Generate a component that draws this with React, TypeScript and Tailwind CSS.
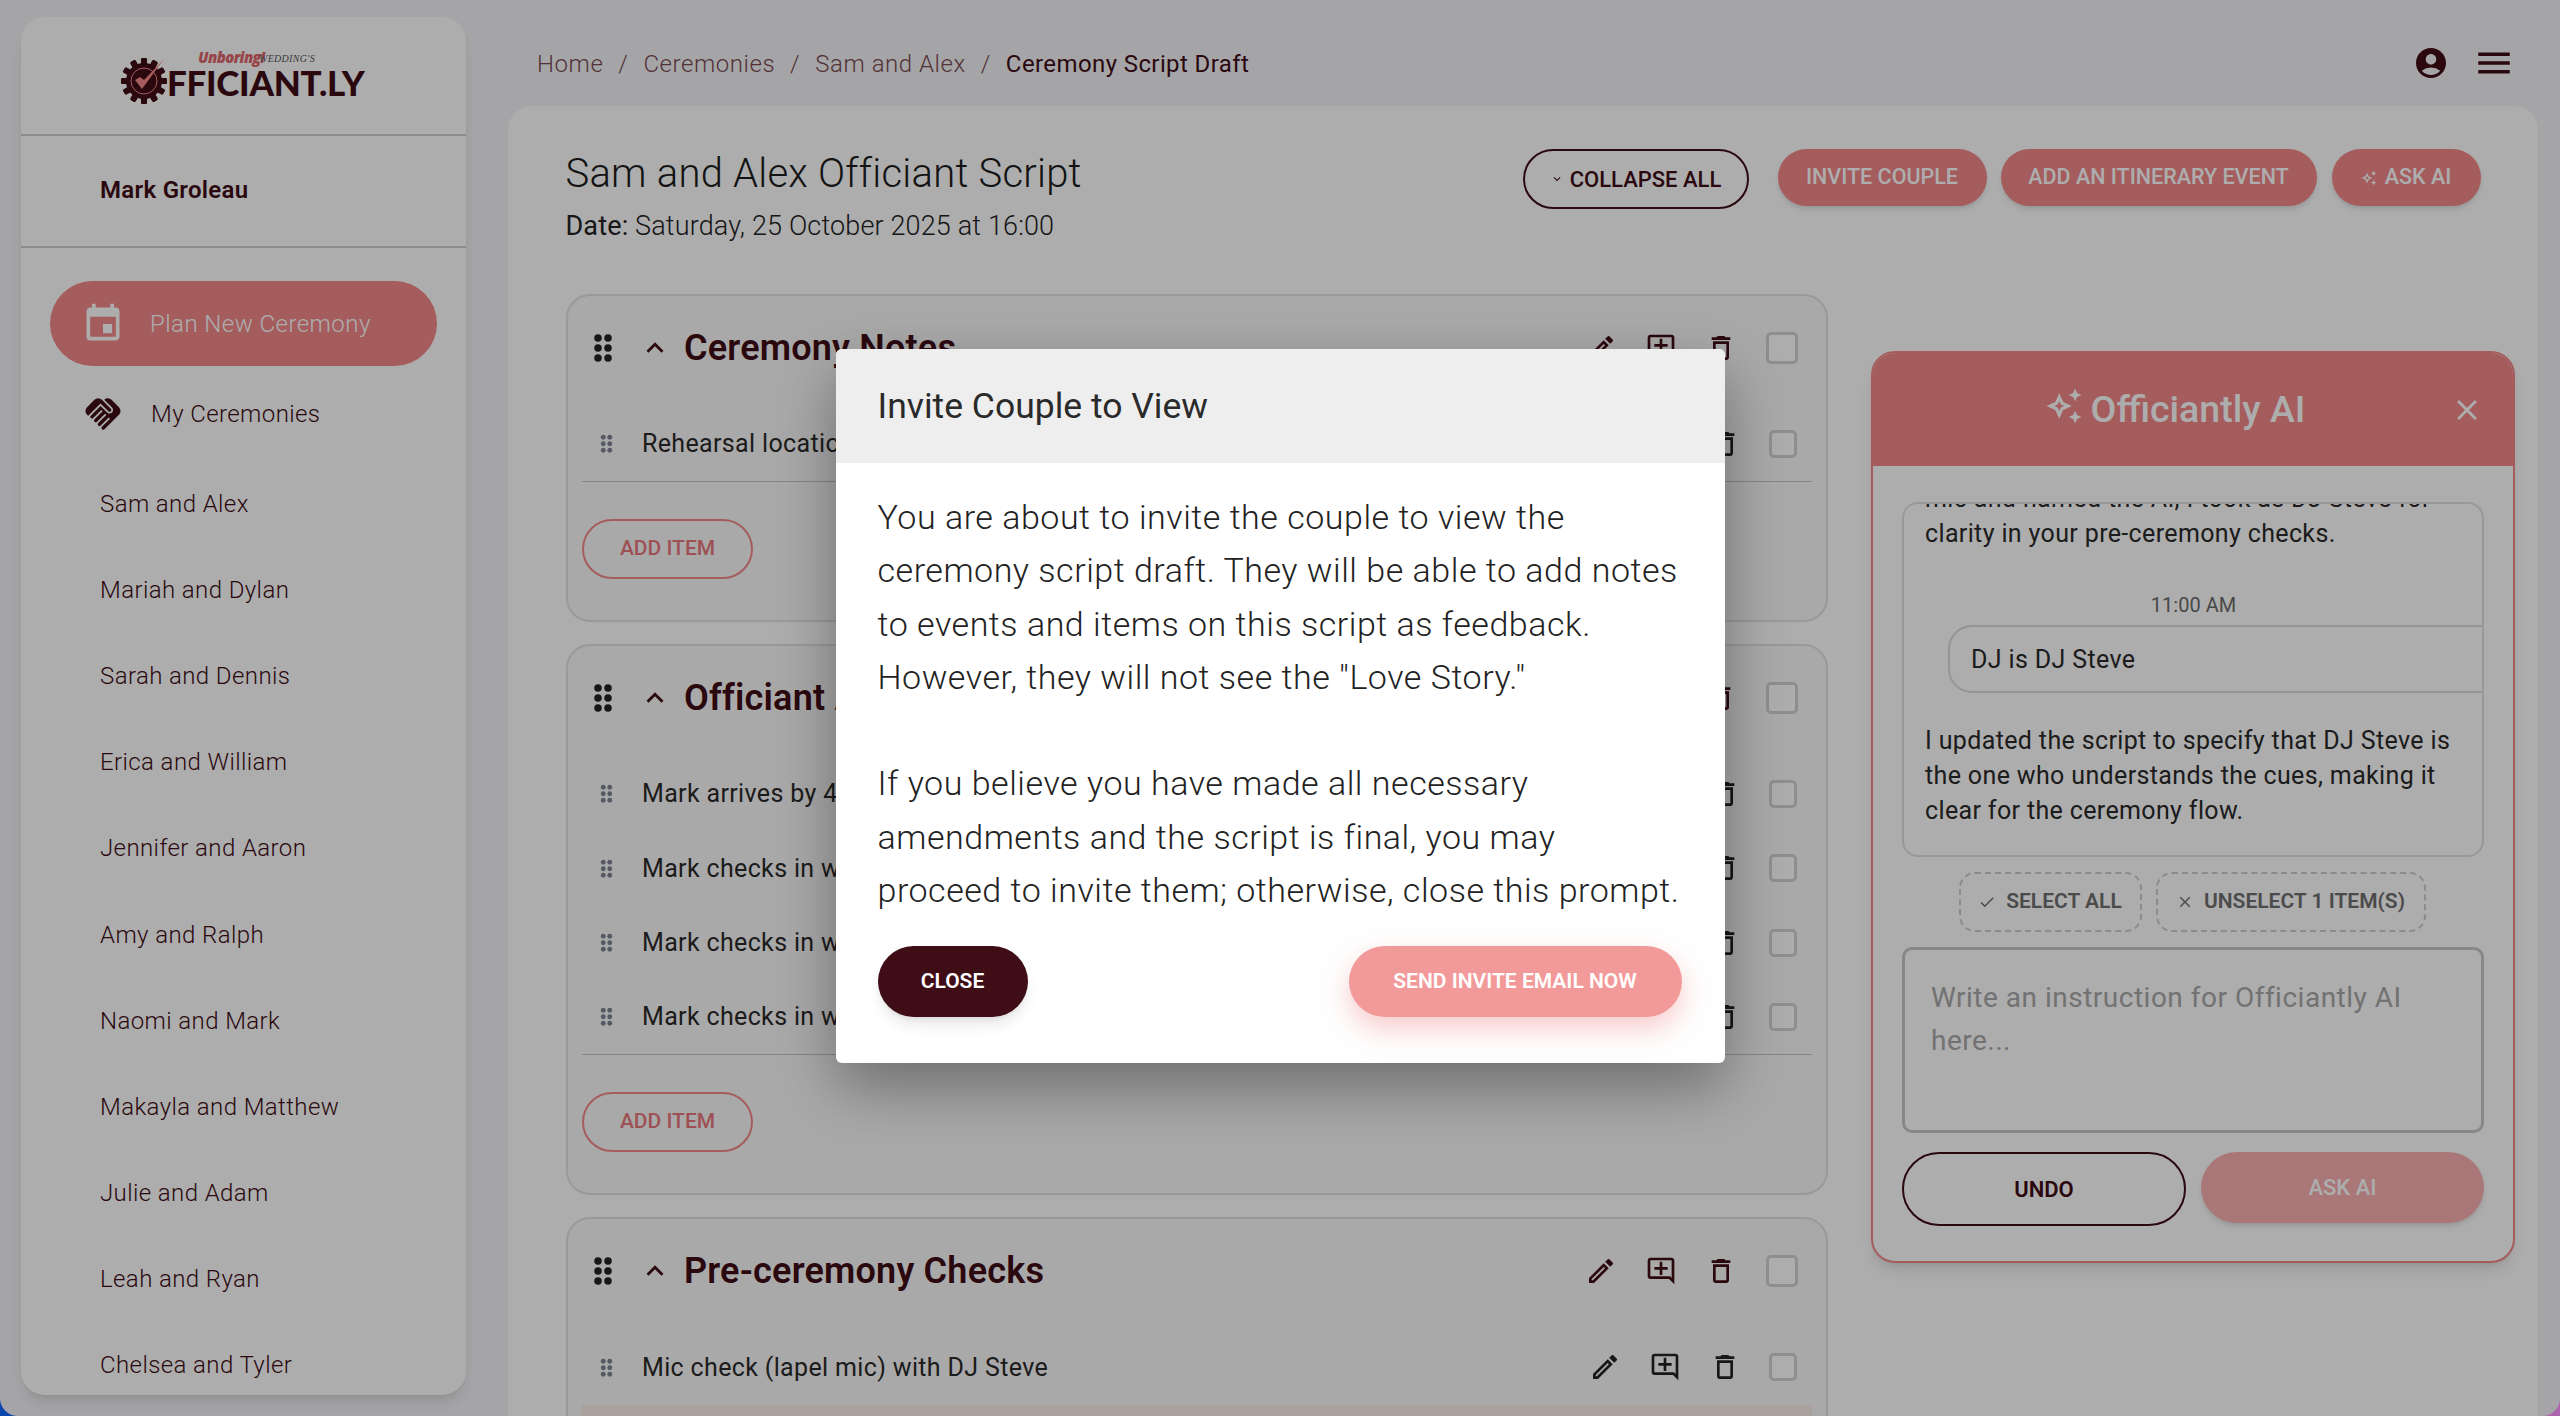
import React from 'react';
import {
  MdAccountCircle,
  MdCheck,
  MdClose,
  MdEvent,
  MdExpandLess,
  MdExpandMore,
  MdHandshake,
  MdMenu,
  MdOutlineAddComment,
  MdOutlineAutoAwesome,
  MdOutlineDelete,
  MdOutlineEdit,
} from 'react-icons/md';

const ceremonies = [
  'Sam and Alex',
  'Mariah and Dylan',
  'Sarah and Dennis',
  'Erica and William',
  'Jennifer and Aaron',
  'Amy and Ralph',
  'Naomi and Mark',
  'Makayla and Matthew',
  'Julie and Adam',
  'Leah and Ryan',
  'Chelsea and Tyler',
];

const DragDots = ({ size, className }: { size: number; className: string }) => (
  <svg width={size} height={size * 1.5} viewBox="0 0 16 24" className={className} fill="currentColor">
    <circle cx="4" cy="4" r="3" />
    <circle cx="12" cy="4" r="3" />
    <circle cx="4" cy="12" r="3" />
    <circle cx="12" cy="12" r="3" />
    <circle cx="4" cy="20" r="3" />
    <circle cx="12" cy="20" r="3" />
  </svg>
);

const Logo = () => (
  <div className="relative w-[245px] h-[50px]">
    <svg width="46" height="46" viewBox="0 0 46 46" className="absolute left-0 top-[4px]">
      {[0, 30, 60, 90, 120, 150, 180, 210, 240, 270, 300, 330].map((a) => (
        <rect key={a} x="20" y="0" width="6" height="46" rx="1.5" fill="#3e0d16" transform={`rotate(${a} 23 23)`} />
      ))}
      <circle cx="23" cy="23" r="18" fill="#3e0d16" />
      <circle cx="23" cy="23" r="13" fill="none" stroke="#f3888a" strokeWidth="1" />
      <path d="M14 22 L21 31 L43 1 L23 22 L19 19 Z" fill="#f3888a" />
    </svg>
    <span className="absolute left-[46px] top-[3px] font-['Lato',sans-serif] font-black text-[35px] leading-[50px] tracking-[-0.3px] text-[#3e0d16]">
      FFICIANT.LY
    </span>
    <span className="absolute left-[77px] top-[-7px] font-['Open_Sans',sans-serif] font-extrabold italic text-[15px] leading-[20px] tracking-[-0.6px] text-[#e0666c]">
      Unboring!
    </span>
    <span className="absolute left-[138px] top-[-5px] font-['Liberation_Serif',serif] italic text-[10px] leading-[20px] tracking-[0.3px] text-[#555]">
      WEDDING'S
    </span>
  </div>
);

const RowActions = ({ header }: { header?: boolean }) => (
  <div className={`flex items-center ml-auto ${header ? 'text-[#3e0d16]' : 'text-[#222]'}`}>
    <span className="w-[60px] flex justify-center"><MdOutlineEdit size={32} /></span>
    <span className="w-[60px] flex justify-center"><MdOutlineAddComment size={32} /></span>
    <span className="w-[60px] flex justify-center"><MdOutlineDelete size={32} /></span>
    <span
      className={
        header
          ? 'ml-[15px] w-[32px] h-[32px] rounded-[5px] border-[3px] border-[#d2d2d2] bg-white'
          : 'ml-[14.5px] w-[28px] h-[28px] rounded-[5px] border-[3px] border-[#d2d2d2] bg-white'
      }
    />
  </div>
);

const ItemRow = ({ text, last, tint }: { text: string; last?: boolean; tint?: boolean }) => (
  <div className={`h-[74.6px] flex items-center pr-[15px] ${last ? 'border-b border-[#c4c4c4]' : ''} ${tint ? 'bg-[#fbece6]' : ''}`}>
    <span className="w-[60px] flex justify-center pr-[12px]"><DragDots size={13} className="text-[#7d8494]" /></span>
    <span className="text-[25px] tracking-[0.35px] text-[#2a2a2a] font-normal whitespace-nowrap">{text}</span>
    <RowActions />
  </div>
);

const CardHeader = ({ title }: { title: string }) => (
  <div className="h-[60px] flex items-center pr-[14px]">
    <span className="w-[24px] ml-[9px] flex justify-center"><DragDots size={20} className="text-[#222]" /></span>
    <MdExpandLess size={34} className="ml-[23px] text-[#3e0d16]" />
    <h2 className="ml-[12px] text-[36px] font-semibold tracking-[0.2px] text-[#3e0d16] whitespace-nowrap">{title}</h2>
    <RowActions header />
  </div>
);

const SectionCard = ({ title, items }: { title: string; items: string[] }) => (
  <section className="shrink-0 rounded-[24px] border-2 border-[#e2e2e2] bg-[#fbf9f9] px-[14px] pt-[22px] pb-[41px]">
    <CardHeader title={title} />
    <div className="mt-[29px] flex flex-col">
      {items.map((t, i) => (
        <ItemRow key={t} text={t} last={i === items.length - 1} />
      ))}
    </div>
    <button className="mt-[37px] h-[60px] w-[171px] rounded-full border-2 border-[#f3888a] text-[#e8787c] text-[21px] font-medium block">
      ADD ITEM
    </button>
  </section>
);

const AiPanel = () => (
  <aside className="shrink-0 ml-[43px] mt-[57px] w-[644px] h-[912px] rounded-[24px] border-2 border-[#f3888a] bg-white shadow-lg flex flex-col overflow-hidden">
    <div className="relative h-[113px] shrink-0 bg-[#f3888a] flex items-center justify-center pr-[36px] text-white">
      <MdOutlineAutoAwesome size={38} className="mr-[8px] mb-[8px]" />
      <span className="text-[37.5px] font-medium">Officiantly AI</span>
      <MdClose size={34} className="absolute right-[29px] top-[40px]" />
    </div>
    <div className="px-[29px] pt-[36px] flex flex-col">
      <div className="h-[355px] rounded-[16px] border-2 border-[#e0e0e0] overflow-hidden flex flex-col justify-end pl-[21px] pb-[27px] text-[25px] tracking-[0.36px] leading-[35px] text-[#2a2a2a]">
        <p className="w-[530px] shrink-0">mic and named the AI, I took as DJ Steve for clarity in your pre-ceremony checks.</p>
        <p className="shrink-0 mt-[40px] text-center text-[20px] tracking-normal leading-[28px] text-[#6b6b6b] pr-[20px]">11:00 AM</p>
        <div className="shrink-0 mt-[6px] ml-[23px] -mr-[2px] h-[68px] rounded-l-[24px] border-2 border-r-0 border-[#dcdcdc] flex items-center pl-[21px]">
          DJ is DJ Steve
        </div>
        <p className="shrink-0 mt-[30px] w-[535px]">I updated the script to specify that DJ Steve is the one who understands the cues, making it clear for the ceremony flow.</p>
      </div>
      <div className="mt-[15px] flex justify-center gap-[14px] pr-[2px]">
        <span className="h-[60px] w-[183px] rounded-[16px] border-2 border-dashed border-[#cdcdcd] flex items-center justify-center gap-[10px] text-[21px] font-semibold text-[#6f6f6f]">
          <MdCheck size={18} /> SELECT ALL
        </span>
        <span className="h-[60px] w-[270px] rounded-[16px] border-2 border-dashed border-[#cdcdcd] flex items-center justify-center gap-[10px] text-[21px] font-semibold text-[#6f6f6f]">
          <MdClose size={18} /> UNSELECT 1 ITEM(S)
        </span>
      </div>
      <div className="mt-[15px] h-[186px] rounded-[10px] border-[3px] border-[#c8c8c8] pl-[26px] pr-[30px] pt-[26px] text-[28px] tracking-[0.5px] leading-[43px] text-[#a8a8a8]">
        Write an instruction for Officiantly AI here...
      </div>
      <div className="mt-[19px] flex gap-[15px]">
        <button className="h-[74px] w-[285px] rounded-full border-2 border-[#3e0d16] text-[22px] font-semibold text-[#3e0d16]">UNDO</button>
        <button className="h-[71px] w-[284px] rounded-full bg-[#fab0b1] text-[22px] font-medium text-white shadow-md">ASK AI</button>
      </div>
    </div>
  </aside>
);

const InviteModal = () => (
  <div className="absolute inset-0 bg-black/32 flex items-center justify-center pb-[4px]">
    <div className="w-[889px] h-[714px] bg-white rounded-[6px] overflow-hidden shadow-[0_24px_60px_rgba(0,0,0,0.35)] flex flex-col">
      <div className="h-[114px] shrink-0 bg-[#eeeeee] flex items-center px-[42px] pt-[2px] text-[35.5px] text-[#2a2a2a]">Invite Couple to View</div>
      <div className="pl-[42px] pr-[43px] pt-[28px] flex flex-col flex-1">
        <p className="text-[34px] leading-[53.3px] font-light tracking-[0.52px] text-[#222] whitespace-nowrap">
          You are about to invite the couple to view the<br />
          ceremony script draft. They will be able to add notes<br />
          to events and items on this script as feedback.<br />
          However, they will not see the "Love Story."<br />
          <br />
          If you believe you have made all necessary<br />
          amendments and the script is final, you may<br />
          proceed to invite them; otherwise, close this prompt.
        </p>
        <div className="mt-[29px] flex justify-between">
          <button className="h-[71px] w-[150px] rounded-full bg-[#3e0d16] text-white text-[21px] font-semibold shadow-lg">CLOSE</button>
          <button className="h-[71px] w-[333px] rounded-full bg-[#f29999] text-white text-[21px] font-semibold shadow-[0_12px_28px_rgba(242,153,153,0.5)]">SEND INVITE EMAIL NOW</button>
        </div>
      </div>
    </div>
  </div>
);

export default function App() {
  return (
    <div className="relative w-[2560px] h-[1416px] overflow-hidden bg-gradient-to-r from-[#0f67ff] to-[#ff96ff] font-['Roboto',sans-serif]">
      <div className="flex h-full rounded-b-[18px] bg-[#f4f4f7] overflow-hidden">
        {/* Sidebar */}
        <aside className="shrink-0 ml-[21px] mt-[17px] w-[445px] h-[1378px] rounded-[24px] bg-white shadow-lg flex flex-col overflow-hidden text-[#3e0d16]">
          <div className="h-[119px] shrink-0 border-b-2 border-[#cfcfcf] flex items-center justify-center pt-[7px]">
            <Logo />
          </div>
          <div className="h-[112px] shrink-0 border-b-2 border-[#cfcfcf] flex items-center pb-[2px] pl-[79px] text-[24px] tracking-[0.3px] font-semibold">Mark Groleau</div>
          <div className="mt-[33px] ml-[29px] w-[387px] h-[85px] shrink-0 rounded-full bg-[#f3888a] flex items-center pl-[33px] text-white text-[24px] tracking-[0.45px] font-light">
            <MdEvent size={44} className="ml-[-2px]" />
            <span className="ml-[25px]">Plan New Ceremony</span>
          </div>
          <div className="mt-[13px] h-[70px] shrink-0 flex items-center pl-[61px] text-[24px] tracking-[0.4px] font-light">
            <MdHandshake size={42} />
            <span className="ml-[27px]">My Ceremonies</span>
          </div>
          <nav className="mt-[12px] flex flex-col">
            {ceremonies.map((c) => (
              <div key={c} className="h-[86.1px] shrink-0 flex items-center pl-[79px] text-[24px] tracking-[0.4px] font-light">{c}</div>
            ))}
          </nav>
        </aside>

        {/* Main */}
        <main className="ml-[42px] mr-[22px] flex-1 min-w-0 flex flex-col">
          <header className="h-[106px] shrink-0 flex items-center pt-[22px] pl-[29px] pr-[23px] text-[24px] tracking-[0.55px] font-light text-[#7a4a52]">
            <span>Home</span>
            <span className="mx-[15px]">/</span>
            <span>Ceremonies</span>
            <span className="mx-[15px]">/</span>
            <span>Sam and Alex</span>
            <span className="mx-[15px]">/</span>
            <span className="font-normal tracking-[0.4px] text-[#3e0d16]">Ceremony Script Draft</span>
            <div className="ml-auto -mt-[2px] flex items-center gap-[24px] text-[#3e0d16]">
              <MdAccountCircle size={36} />
              <MdMenu size={42} />
            </div>
          </header>

          <div className="flex-1 min-h-0 rounded-t-[24px] bg-white overflow-hidden pl-[57.5px] pr-[57.5px] pt-[44px]">
            <div className="flex items-start justify-between">
              <div>
                <h1 className="text-[40px] leading-[48px] font-light tracking-[0.22px] text-[#1c1c1c] whitespace-nowrap">Sam and Alex Officiant Script</h1>
                <p className="mt-[10px] text-[27px] tracking-[0.15px] leading-[36px] font-light text-[#222]"><span className="font-normal">Date:</span> Saturday, 25 October 2025 at 16:00</p>
              </div>
              <div className="-mt-[1px] flex items-start">
                <button className="h-[60px] w-[226px] rounded-full border-2 border-[#3e0d16] flex items-center justify-center gap-[6px] text-[22px] font-medium text-[#3e0d16]">
                  <MdExpandMore size={14} /> COLLAPSE ALL
                </button>
                <button className="ml-[29px] h-[57px] w-[209px] rounded-full bg-[#f3888a] text-white text-[21.5px] font-medium shadow-md">INVITE COUPLE</button>
                <button className="ml-[14px] h-[57px] w-[316px] rounded-full bg-[#f3888a] text-white text-[21.5px] font-medium shadow-md">ADD AN ITINERARY EVENT</button>
                <button className="ml-[15px] h-[57px] w-[149px] rounded-full bg-[#f3888a] text-white text-[21.5px] font-medium shadow-md flex items-center justify-center gap-[8px]">
                  <MdOutlineAutoAwesome size={16} /> ASK AI
                </button>
              </div>
            </div>

            <div className="mt-[50px] flex items-start">
              <div className="shrink-0 ml-[0.5px] w-[1262px] flex flex-col gap-[22px]">
                <SectionCard title="Ceremony Notes" items={['Rehearsal location and time']} />
                <SectionCard
                  title="Officiant Arrival"
                  items={['Mark arrives by 4:00 PM', 'Mark checks in with planner', 'Mark checks in with venue', 'Mark checks in with couple']}
                />
                <section className="shrink-0 rounded-t-[24px] border-2 border-[#e2e2e2] bg-[#fbf9f9] px-[14px] pt-[22px]">
                  <CardHeader title="Pre-ceremony Checks" />
                  <div className="mt-[29px] flex flex-col">
                    <ItemRow text="Mic check (lapel mic) with DJ Steve" />
                    <ItemRow text="" tint />
                  </div>
                </section>
              </div>
              <AiPanel />
            </div>
          </div>
        </main>
      </div>
      <InviteModal />
    </div>
  );
}
